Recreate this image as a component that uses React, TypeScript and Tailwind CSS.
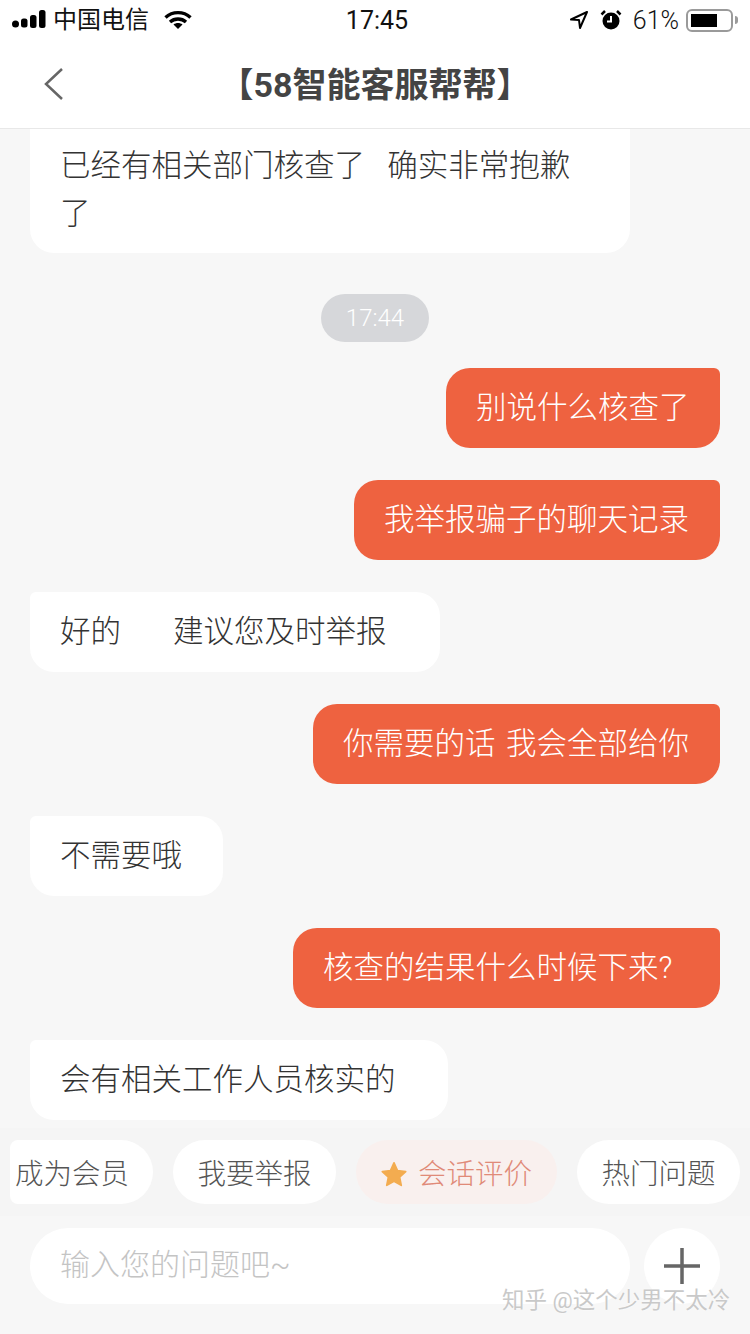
const font = "font-['Roboto','Noto_Sans_CJK_SC',sans-serif]";

function Outgoing({ text, width }: { text: string; width: string }) {
  return (
    <div className={`self-end ${width} h-20 rounded-[24px] rounded-tr-[6px] bg-[#ee6240] pl-[30px] text-[30.5px] leading-[80px] font-light whitespace-pre text-white [word-spacing:3px]`}>
      {text}
    </div>
  );
}

function Incoming({ text, width }: { text: string; width: string }) {
  return (
    <div className={`self-start ${width} h-20 rounded-[24px] rounded-tl-[6px] bg-white pl-[30px] text-[30.5px] leading-[80px] font-light whitespace-pre text-[#333333]`}>
      {text}
    </div>
  );
}

function StatusBar() {
  return (
    <div className="flex h-10 items-center justify-between pl-3 pr-3 text-[25px] leading-none text-[#111111]">
      <div className="flex w-[200px] items-center">
        <svg width="34" height="20" viewBox="0 0 34 20" fill="#000">
          <circle cx="3.5" cy="14" r="3.5" />
          <rect x="9" y="8.5" width="6.5" height="9" rx="2.5" />
          <rect x="18" y="5" width="6.5" height="13" rx="2.5" />
          <rect x="27" y="0" width="6.5" height="18" rx="2.5" />
        </svg>
        <span className="ml-[7px] text-[24px]">中国电信</span>
        <svg className="ml-[15px]" width="28" height="20" viewBox="0 0 28 20" fill="none" stroke="#000" strokeWidth="3.4">
          <path d="M1.5 7.5C8.5 1 19.5 1 26.5 7.5" />
          <path d="M6 12c4.5-4 11.500-4 16 0" />
          <path d="M14 19l-4.500-4.500c2.500-2 6.500-2 9 0z" fill="#000" stroke="none" />
        </svg>
      </div>
      <span className="ml-[4px] text-[25px]">17:45</span>
      <div className="flex w-[200px] items-center justify-end">
        <svg width="20" height="20" viewBox="0 0 20 20" fill="none" stroke="#000" strokeWidth="2" strokeLinejoin="round">
          <path d="M18 2L2 9.500l8 .5 1 8z" />
        </svg>
        <svg className="ml-[11px]" width="22" height="22" viewBox="0 0 22 22">
          <circle cx="11" cy="12" r="8.500" fill="#000" />
          <path d="M11 7v5.500H7" fill="none" stroke="#fff" strokeWidth="2" />
          <path d="M1.500 5.500L5 2M20.500 5.500L17 2" stroke="#000" strokeWidth="2.500" />
        </svg>
        <span className="ml-[11px] text-[25px] font-light">61%</span>
        <div className="ml-[7px] h-[23px] w-[47px] rounded-[6px] border-2 border-[#9a9a9a] p-[3px]">
          <div className="h-full w-[26px] bg-black" />
        </div>
        <div className="ml-[2px] h-[8px] w-[3px] rounded-r-full bg-[#9a9a9a]" />
      </div>
    </div>
  );
}

function NavBar() {
  return (
    <div className="relative flex h-[89px] items-center justify-center border-b border-[#e8e8e8] pt-[2px]">
      <svg className="absolute left-[43px] top-[27px]" width="22" height="34" viewBox="0 0 22 34" fill="none" stroke="#666666" strokeWidth="2.500">
        <path d="M19 2L3 17l16 15" />
      </svg>
      <span className="text-[34px] leading-none font-bold text-[#444444]">【58智能客服帮帮】</span>
    </div>
  );
}

function Chips() {
  return (
    <div className="flex h-[88px] shrink-0 items-start gap-5 bg-[#f5f5f5] pl-[10px] pt-3 text-[28.5px] leading-[70px] font-light text-[#555555]">
      <div className="h-16 w-[143px] rounded-r-[32px] rounded-l-[8px] bg-white pl-[5px]">成为会员</div>
      <div className="h-16 w-[163px] rounded-[32px] bg-white text-center">我要举报</div>
      <div className="flex h-16 w-[201px] items-center rounded-[32px] bg-[#f9f0ee] pl-[24px] text-[#e08a78]">
        <svg className="mt-[3px]" width="28" height="28" viewBox="0 0 24 24" fill="#f3ac50" stroke="#f3ac50" strokeWidth="1.500" strokeLinejoin="round">
          <path d="M12 2.500l3 6.500 7 .9-5.200 4.800 1.400 7L12 18.200l-6.200 3.500 1.400-7L2 9.900l7-.9z" />
        </svg>
        <span className="ml-[10px] mt-[6px]">会话评价</span>
      </div>
      <div className="h-16 w-[163px] rounded-[32px] bg-white text-center">热门问题</div>
    </div>
  );
}

function InputBar() {
  return (
    <div className="relative flex h-[118px] shrink-0 items-start bg-[#f7f7f7] pl-[30px] pt-3">
      <div className="h-[76px] w-[600px] rounded-[38px] bg-white pl-[30px] text-[30px] leading-[74px] font-light text-[#c4c4c4]">
        输入您的问题吧~
      </div>
      <div className="ml-[14px] flex h-[76px] w-[76px] items-center justify-center rounded-full bg-white">
        <svg width="36" height="36" viewBox="0 0 36 36" stroke="#666666" strokeWidth="3.500">
          <path d="M0 18h36M18 0v36" />
        </svg>
      </div>
      <span className="absolute left-[502px] top-[73px] text-[22.5px] leading-none text-[#c9c9c9] [text-shadow:0_0_2px_#ffffff]">知乎 @这个少男不太冷</span>
    </div>
  );
}

export default function App() {
  return (
    <div className={`flex h-[1334px] w-[750px] flex-col overflow-hidden bg-[#f7f7f7] ${font}`}>
      <div className="shrink-0 bg-white">
        <StatusBar />
        <NavBar />
      </div>
      <div className="flex h-[999px] shrink-0 flex-col px-[30px]">
        <div className="w-[600px] rounded-b-[24px] bg-white px-[30px] pt-[13px] pb-[15px] text-[30.5px] leading-[48px] font-light whitespace-pre text-[#333333]">
          已经有相关部门核查了   确实非常抱歉
          <br />了
        </div>
        <div className="mt-[41px] h-12 w-[108px] self-center rounded-full bg-[#d6d7da] text-center text-[24px] leading-[48px] font-light text-white">17:44</div>
        <div className="mt-[26px] flex flex-col gap-8">
          <Outgoing text="别说什么核查了" width="w-[274px]" />
          <Outgoing text="我举报骗子的聊天记录" width="w-[366px]" />
          <Incoming text="好的       建议您及时举报" width="w-[410px]" />
          <Outgoing text="你需要的话 我会全部给你" width="w-[407px]" />
          <Incoming text="不需要哦" width="w-[193px]" />
          <Outgoing text="核查的结果什么时候下来?" width="w-[427px]" />
          <Incoming text="会有相关工作人员核实的" width="w-[418px]" />
        </div>
      </div>
      <Chips />
      <InputBar />
    </div>
  );
}
